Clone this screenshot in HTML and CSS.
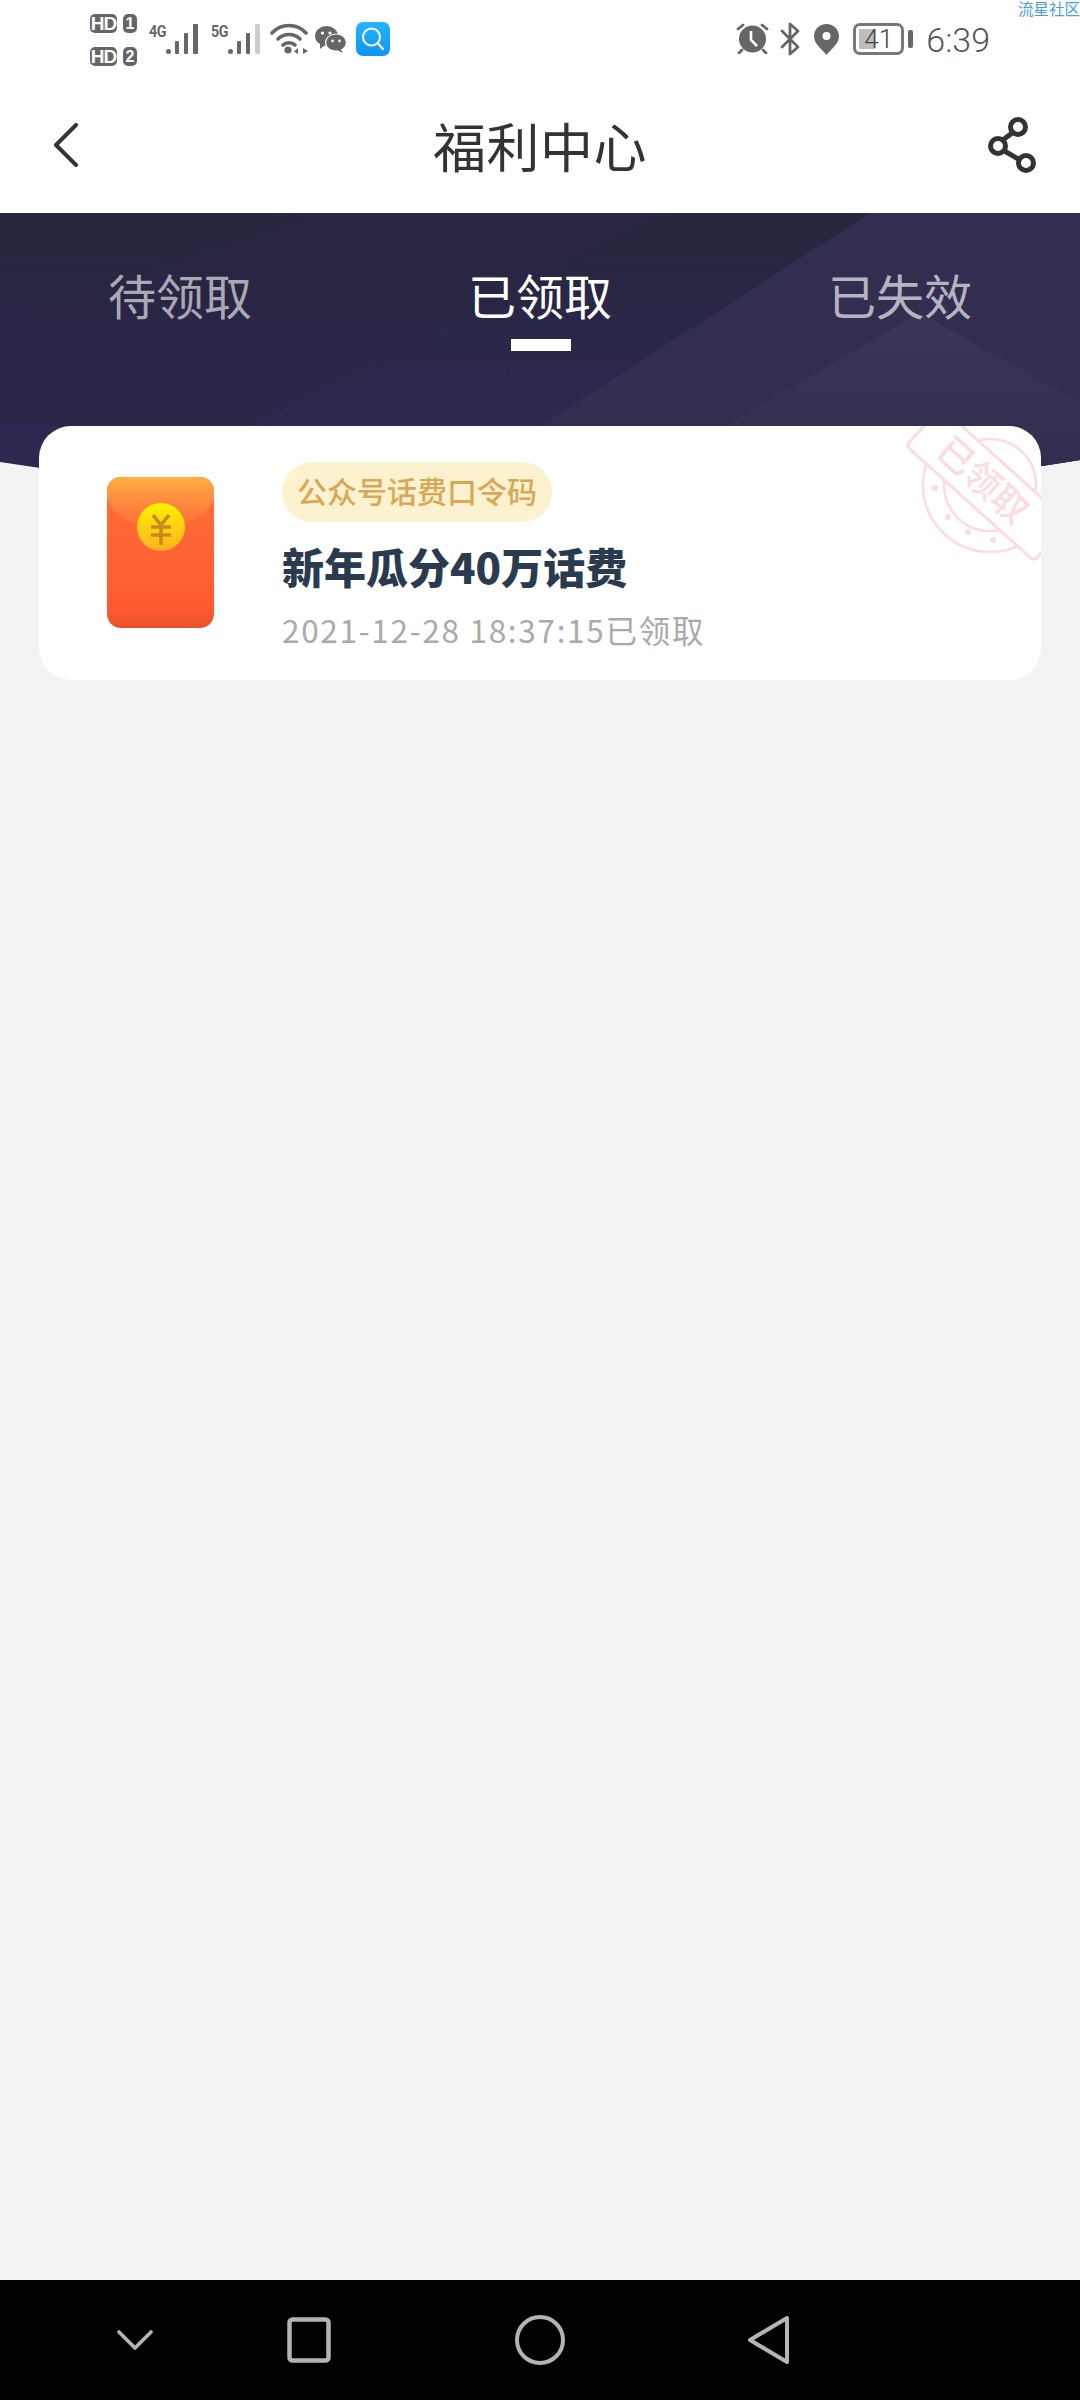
FILE: index.html
```html
<!DOCTYPE html>
<html lang="zh-CN">
<head>
<meta charset="UTF-8" />
<meta name="viewport" content="width=device-width, initial-scale=1" />
<title>福利中心</title>
<link rel="stylesheet" href="styles.css">
</head>
<body>
  <div class="app">
    <div class="watermark">流星社区</div>

    <!-- Status bar -->
    <div class="statusbar">
      <div class="status-left">
        <div class="sims">
          <div class="sim"><span class="hd">HD</span><span class="num">1</span></div>
          <div class="sim"><span class="hd">HD</span><span class="num">2</span></div>
        </div>
        <div class="signal signal-first">
          <span class="net">4G</span>
          <svg width="32" height="30" viewBox="0 0 32 30">
            <g fill="#666">
              <rect x="0" y="25" width="5" height="5" rx="2.5"/>
              <rect x="9" y="17" width="4" height="13" rx="1"/>
              <rect x="18" y="9" width="4" height="21" rx="1"/>
              <rect x="27" y="0" width="5" height="30" rx="1"/>
            </g>
          </svg>
        </div>
        <div class="signal signal-second">
          <span class="net">5G</span>
          <svg width="32" height="30" viewBox="0 0 32 30">
            <g fill="#666">
              <rect x="0" y="25" width="5" height="5" rx="2.5"/>
              <rect x="9" y="17" width="4" height="13" rx="1"/>
              <rect x="18" y="9" width="4" height="21" rx="1"/>
            </g>
            <rect x="27" y="0" width="5" height="30" rx="1" fill="#ccc"/>
          </svg>
        </div>
        <svg class="wifi" width="38" height="31" viewBox="0 0 38 31">
          <g fill="none" stroke="#666" stroke-width="3.6" stroke-linecap="round">
            <path d="M2 10C11 0 27 0 36 10"/>
            <path d="M8 16C14 10 24 10 30 16"/>
            <path d="M13 22C16 19 22 19 25 22"/>
          </g>
          <circle cx="18" cy="27" r="3.6" fill="#666"/>
          <path d="M28 25L24 28.500 28 31ZM31 25V31M33 25L38 28 33 31Z" fill="#666"/>
        </svg>
        <svg class="wechat" width="32" height="27" viewBox="0 0 32 27">
          <ellipse cx="11.500" cy="10" rx="11.500" ry="10" fill="#666"/>
          <path d="M5 16L5 23 11 18Z" fill="#666"/>
          <ellipse cx="21" cy="16.500" rx="11" ry="9" fill="#fff"/>
          <ellipse cx="21" cy="16.500" rx="9.800" ry="8" fill="#666"/>
          <path d="M25 22L28 27 22 24Z" fill="#666"/>
          <g fill="#fff">
            <circle cx="7.500" cy="7" r="1.600"/>
            <circle cx="15" cy="7" r="1.600"/>
            <circle cx="17.500" cy="15" r="1.400"/>
            <circle cx="24.500" cy="15" r="1.400"/>
          </g>
        </svg>
        <svg class="search-app" width="34" height="34" viewBox="0 0 34 34">
          <defs>
            <linearGradient id="searchBg" x1="0" y1="0" x2="0" y2="1">
              <stop offset="0" stop-color="#27b4fb"/>
              <stop offset="1" stop-color="#0b95f5"/>
            </linearGradient>
          </defs>
          <rect width="34" height="34" rx="7" fill="url(#searchBg)"/>
          <circle cx="15.500" cy="15" r="8.500" fill="none" stroke="#fff" stroke-width="2"/>
          <path d="M21.500 21L27 27" stroke="#fff" stroke-width="2.200" stroke-linecap="round"/>
        </svg>
      </div>

      <div class="status-right">
        <svg width="33" height="31" viewBox="0 0 33 31">
          <circle cx="16.500" cy="16" r="13.500" fill="#666"/>
          <path d="M15 8V17L21 23" fill="none" stroke="#fff" stroke-width="2.600"/>
          <path d="M2 6L7 2M31 6L26 2M6 27L3 30M27 27L30 30" stroke="#666" stroke-width="2.800" stroke-linecap="round"/>
        </svg>
        <svg class="bt" width="21" height="34" viewBox="0 0 21 34">
          <path d="M2 9L18 25 10 32V2L18 9 2 25" fill="none" stroke="#666" stroke-width="2.800" stroke-linejoin="round" stroke-linecap="round"/>
        </svg>
        <svg class="pin" width="25" height="31" viewBox="0 0 25 31">
          <path d="M12.500 0C5.600 0 0 5.400 0 12.200 0 20 8 25 12.500 31 17 25 25 20 25 12.200 25 5.400 19.400 0 12.500 0Z" fill="#666"/>
          <circle cx="12.500" cy="12" r="4" fill="#fff"/>
        </svg>
        <div class="battery">
          <div class="battery-level"></div>
          <span class="battery-num">41</span>
        </div>
        <div class="battery-nub"></div>
        <span class="time">6:39</span>
      </div>
    </div>

    <!-- Title bar -->
    <div class="titlebar">
      <svg class="back" width="26" height="44" viewBox="0 0 26 44">
        <path d="M23 2L3 22 23 42" fill="none" stroke="#333" stroke-width="4" stroke-linecap="round" stroke-linejoin="round"/>
      </svg>
      <h1>福利中心</h1>
      <svg class="share" width="49" height="56" viewBox="0 0 49 56">
        <path d="M25 16L12 26M14 32L33 43" stroke="#333" stroke-width="5" fill="none"/>
        <g fill="#fff" stroke="#333" stroke-width="5">
          <circle cx="31" cy="10" r="7.500"/>
          <circle cx="11" cy="29" r="7.500"/>
          <circle cx="39" cy="46" r="7.500"/>
        </g>
      </svg>
    </div>

    <!-- Hero with tabs -->
    <div class="hero">
      <svg class="hero-bg" width="1080" height="292" viewBox="0 0 1080 292">
        <defs>
          <linearGradient id="heroBase" x1="0" y1="0" x2="0" y2="1">
            <stop offset="0" stop-color="#26263c"/>
            <stop offset="0.7" stop-color="#2c284f"/>
          </linearGradient>
          <linearGradient id="heroPeak" x1="0" y1="0" x2="0" y2="1">
            <stop offset="0" stop-color="#3a3658"/>
            <stop offset="0.75" stop-color="#322e50"/>
          </linearGradient>
          <clipPath id="heroShape">
            <path d="M0 0H1080V247Q540 335 0 249Z"/>
          </clipPath>
        </defs>
        <g clip-path="url(#heroShape)">
          <rect width="1080" height="292" fill="url(#heroBase)"/>
          <path d="M0 105L310 0H670L250 213H0Z" fill="#2a2745" opacity="0.6"/>
          <path d="M540 213L870 0H1080V292H540Z" fill="#322e50"/>
          <path d="M725 213L920 100 1080 190V292H725Z" fill="url(#heroPeak)"/>
        </g>
      </svg>
      <div class="tabs">
        <div class="tab">待领取</div>
        <div class="tab tab-active">已领取</div>
        <div class="tab tab-lost">已失效</div>
      </div>
    </div>

    <!-- Content -->
    <div class="content">
      <div class="card">
        <svg class="envelope" width="107" height="151" viewBox="0 0 107 151">
          <defs>
            <linearGradient id="envBody" x1="0" y1="0" x2="0" y2="1">
              <stop offset="0" stop-color="#ff7038"/>
              <stop offset="0.88" stop-color="#ff5a30"/>
              <stop offset="1" stop-color="#e9502a"/>
            </linearGradient>
            <linearGradient id="envFlap" x1="0" y1="0" x2="0" y2="1">
              <stop offset="0" stop-color="#ffaf45"/>
              <stop offset="0.5" stop-color="#ff8a3e"/>
              <stop offset="1" stop-color="#ff6f38"/>
            </linearGradient>
            <linearGradient id="envCoin" x1="0" y1="0" x2="0" y2="1">
              <stop offset="0" stop-color="#fff200"/>
              <stop offset="1" stop-color="#ffb21f"/>
            </linearGradient>
          </defs>
          <rect width="107" height="151" rx="14" fill="url(#envBody)"/>
          <path d="M0 14C0 6 6 0 14 0H93C101 0 107 6 107 14V22C100 40 78 50 53 50 30 50 8 42 0 22Z" fill="url(#envFlap)"/>
          <circle cx="54" cy="50" r="24" fill="url(#envCoin)"/>
          <path d="M46 38L54 48 62 38M44 50H64M44 58H64M54 48V68" fill="none" stroke="#c98a1c" stroke-width="3.600"/>
        </svg>

        <div class="card-body">
          <span class="pill">公众号话费口令码</span>
          <div class="card-title">新年瓜分40万话费</div>
          <div class="card-date">2021-12-28 18:37:15已领取</div>
        </div>

        <svg class="stamp" width="160" height="160" viewBox="0 0 160 160">
          <g fill="none" stroke="#fbdde1" stroke-width="2.500">
            <circle cx="109" cy="59" r="67"/>
            <circle cx="109" cy="59" r="46"/>
          </g>
          <g fill="#fbdde1">
            <circle cx="54" cy="62" r="3"/>
            <circle cx="67" cy="91" r="3"/>
            <circle cx="87" cy="106" r="3"/>
            <circle cx="112" cy="114" r="3"/>
          </g>
          <g transform="rotate(42 102 54)">
            <rect x="22" y="28" width="172" height="52" rx="4" fill="#fff" stroke="#fbdde1" stroke-width="3"/>
            <text class="stamp-text" x="102" y="67" text-anchor="middle">已领取</text>
          </g>
        </svg>
      </div>
    </div>

    <!-- Android nav -->
    <div class="navbar">
      <svg class="nav-down" width="36" height="21" viewBox="0 0 36 21">
        <path d="M2 2L18 18 34 2" fill="none" stroke="#b4b4b4" stroke-width="3.600" stroke-linecap="round" stroke-linejoin="round"/>
      </svg>
      <svg class="nav-square" width="44" height="46" viewBox="0 0 44 46">
        <rect x="2.500" y="2.500" width="39" height="41" rx="3" fill="none" stroke="#b4b4b4" stroke-width="4.500"/>
      </svg>
      <svg class="nav-circle" width="50" height="50" viewBox="0 0 50 50">
        <circle cx="25" cy="25" r="23" fill="none" stroke="#b4b4b4" stroke-width="4"/>
      </svg>
      <svg class="nav-back" width="43" height="50" viewBox="0 0 43 50">
        <path d="M40 3V47L3 25Z" fill="none" stroke="#b4b4b4" stroke-width="4" stroke-linejoin="round"/>
      </svg>
    </div>
  </div>
</body>
</html>
```

FILE: styles.css
```css
/* Reset and base */
* {
  box-sizing: border-box;
}

html,
body {
  margin: 0;
  padding: 0;
}

body {
  font-family: "Noto Sans CJK SC", "Noto Sans", sans-serif;
  background: #f3f3f3;
  color: #333;
}

.app {
  position: relative;
  width: 1080px;
  height: 2400px;
  display: flex;
  flex-direction: column;
  overflow: hidden;
}

.watermark {
  position: absolute;
  top: 0;
  right: 0;
  font-size: 15.5px;
  line-height: 17px;
  color: #4a9ee0;
}

/* Status bar */
.statusbar {
  height: 70px;
  background: #fff;
  display: flex;
  justify-content: space-between;
  padding: 0 90px;
}

.status-left {
  display: flex;
  align-items: flex-start;
}

.sims {
  display: flex;
  flex-direction: column;
  gap: 14px;
  padding-top: 14px;
  width: 47px;
}

.sim {
  display: flex;
  gap: 6px;
}

.hd,
.num {
  height: 19px;
  background: #666;
  color: #fff;
  font-family: "Liberation Sans", sans-serif;
  font-weight: 700;
  font-size: 19px;
  line-height: 19px;
  text-align: center;
  border-radius: 5px;
}

.hd {
  width: 27px;
  letter-spacing: -1px;
}

.num {
  width: 14px;
  font-size: 16px;
}

.signal {
  display: flex;
  align-items: flex-start;
  padding-top: 24px;
}

.signal-first {
  margin-left: 12px;
}

.signal-second {
  margin-left: 13px;
}

.net {
  width: 17px;
  font-family: "Roboto", sans-serif;
  font-weight: 700;
  font-size: 17px;
  line-height: 15px;
  letter-spacing: -0.5px;
  color: #666;
  transform: scaleX(0.85);
  transform-origin: left top;
}

.wifi {
  margin: 23px 0 0 10px;
}

.wechat {
  margin: 26px 0 0 7px;
}

.search-app {
  margin: 22px 0 0 9px;
}

.status-right {
  display: flex;
  align-items: flex-start;
  padding-top: 23px;
}

.bt {
  margin: -1px 0 0 11px;
}

.pin {
  margin: 1px 0 0 13px;
}

.battery {
  position: relative;
  width: 51px;
  height: 32px;
  margin-left: 14px;
  border: 3px solid #777;
  border-radius: 7px;
  padding: 3px;
}

.battery-level {
  width: 41%;
  height: 100%;
  background: #bdbdbd;
}

.battery-num {
  position: absolute;
  inset: 0;
  font-family: "Roboto", sans-serif;
  font-weight: 300;
  font-size: 26px;
  line-height: 26px;
  text-align: center;
  color: #444;
}

.battery-nub {
  width: 5px;
  height: 18px;
  margin: 7px 0 0 4px;
  background: #666;
  border-radius: 2px;
}

.time {
  margin-left: 13px;
  font-family: "Roboto", sans-serif;
  font-weight: 300;
  font-size: 34px;
  line-height: 34px;
  color: #555;
}

/* Title bar */
.titlebar {
  height: 143px;
  background: #fff;
  display: grid;
  grid-template-columns: 1fr auto 1fr;
  align-items: center;
  padding: 7px 44px 0 53px;
}

.titlebar h1 {
  margin: 0 0 0 -9px;
  font-weight: 400;
  font-size: 53px;
  line-height: 70px;
  letter-spacing: 0.5px;
  color: #333;
}

.share {
  justify-self: end;
}

/* Hero */
.hero {
  position: relative;
  height: 292px;
  margin-bottom: -79px;
}

.hero-bg {
  position: absolute;
  top: 0;
  left: 0;
}

.tabs {
  position: relative;
  display: grid;
  grid-template-columns: repeat(3, 1fr);
  padding-top: 48px;
}

.tab {
  position: relative;
  text-align: center;
  font-size: 48px;
  line-height: 66px;
  color: #a9a8b6;
}

.tab-lost {
  color: #b5b3c2;
}

.tab-active {
  color: #fff;
}

.tab-active::after {
  content: "";
  position: absolute;
  left: 151px;
  top: 78px;
  width: 60px;
  height: 12px;
  background: #fff;
}

/* Card */
.content {
  position: relative;
  flex: 1;
  padding: 0 39px;
}

.card {
  position: relative;
  height: 254px;
  background: #fff;
  border-radius: 32px;
  display: flex;
  gap: 68px;
  padding: 36px 0 0 68px;
  overflow: hidden;
}

.envelope {
  margin-top: 15px;
  flex-shrink: 0;
  filter: blur(0.5px);
}

.card-body {
  display: flex;
  flex-direction: column;
  align-items: flex-start;
}

.pill {
  height: 60px;
  padding: 0 15px;
  background: #fdf2d0;
  border-radius: 30px;
  font-weight: 500;
  font-size: 30px;
  line-height: 56px;
  color: #d9a857;
}

.card-title {
  margin-top: 15px;
  font-weight: 900;
  font-size: 42px;
  line-height: 58px;
  color: #2a3a4f;
}

.card-date {
  margin-top: 11px;
  font-size: 31.5px;
  line-height: 46px;
  letter-spacing: 1.7px;
  color: #aaa;
}

.stamp {
  position: absolute;
  top: 0;
  right: 0;
}

.stamp-text {
  font-family: "Noto Sans CJK SC", sans-serif;
  font-weight: 500;
  font-size: 36px;
  fill: #fbdde1;
}

/* Bottom navigation */
.navbar {
  height: 120px;
  background: #000;
  display: flex;
  align-items: center;
  padding-left: 117px;
}

.nav-square {
  margin-left: 134px;
}

.nav-circle {
  margin-left: 184px;
}

.nav-back {
  margin-left: 182px;
}
```
